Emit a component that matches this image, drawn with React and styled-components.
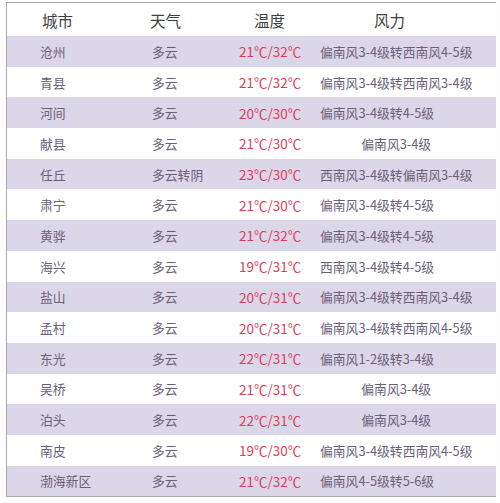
import styled, { createGlobalStyle } from 'styled-components'

const GlobalStyle = createGlobalStyle`
    html, body {
        margin: 0;
        padding: 0;
        background: #fff;
    }
`

const rows = [
    ['沧州', '多云', '21℃/32℃', '偏南风3-4级转西南风4-5级', 'left'],
    ['青县', '多云', '21℃/32℃', '偏南风3-4级转西南风3-4级', 'left'],
    ['河间', '多云', '20℃/30℃', '偏南风3-4级转4-5级', 'left'],
    ['献县', '多云', '21℃/30℃', '偏南风3-4级', 'center'],
    ['任丘', '多云转阴', '23℃/30℃', '西南风3-4级转偏南风3-4级', 'left'],
    ['肃宁', '多云', '21℃/30℃', '偏南风3-4级转4-5级', 'left'],
    ['黄骅', '多云', '21℃/32℃', '偏南风3-4级转4-5级', 'left'],
    ['海兴', '多云', '19℃/31℃', '西南风3-4级转4-5级', 'left'],
    ['盐山', '多云', '20℃/31℃', '偏南风3-4级转西南风3-4级', 'left'],
    ['孟村', '多云', '20℃/31℃', '偏南风3-4级转西南风4-5级', 'left'],
    ['东光', '多云', '22℃/31℃', '偏南风1-2级转3-4级', 'left'],
    ['吴桥', '多云', '21℃/31℃', '偏南风3-4级', 'center'],
    ['泊头', '多云', '22℃/31℃', '偏南风3-4级', 'center'],
    ['南皮', '多云', '19℃/30℃', '偏南风3-4级转西南风4-5级', 'left'],
    ['渤海新区', '多云', '21℃/32℃', '偏南风4-5级转5-6级', 'left'],
]

const Page = styled.div`
    padding: 2px 4px 0 6px;
    font-family: "Noto Sans CJK SC", "Noto Sans", sans-serif;
`

const Table = styled.div`
    border: 1px solid #a9a9a9;
    box-shadow: 0 1px 1px rgba(0, 0, 0, 0.08);
    display: grid;
    grid-template-columns: 133px 90px 80px 1fr;
`

const Row = styled.div`
    display: contents;
`

const Cell = styled.div`
    height: ${({ $head }) => ($head ? '33px' : '30.7px')};
    display: flex;
    align-items: center;
    justify-content: ${({ $align }) => ($align === 'center' ? 'center' : 'flex-start')};
    padding: ${({ $pad }) => $pad};
    background: ${({ $shade }) => ($shade ? '#dcd6e9' : '#fff')};
    color: ${({ $head, $hot }) => ($head ? '#3f3f3f' : $hot ? '#de3d5a' : '#6c5f79')};
    font-size: ${({ $head, $hot }) => ($head ? '15.5px' : $hot ? '13.5px' : '12.8px')};
    white-space: nowrap;
    box-sizing: border-box;
`

const pads = ['0 0 0 33px', '0 0 0 12px', '0 0 0 9px', '0 24px 0 10px']
const headPads = ['0 0 0 35px', '0 0 0 10px', '0 0 0 24px', '0 0 0 64px']

const App = () => {
    return (
        <Page>
            <GlobalStyle />
            <Table>
                <Row>
                    {['城市', '天气', '温度', '风力'].map((h, i) => (
                        <Cell key={h} $head $pad={headPads[i]}>{h}</Cell>
                    ))}
                </Row>
                {rows.map(([city, weather, temp, wind, align], i) => {
                    const shade = i % 2 === 0
                    return (
                        <Row key={city}>
                            <Cell $shade={shade} $pad={pads[0]}>{city}</Cell>
                            <Cell $shade={shade} $pad={pads[1]}>{weather}</Cell>
                            <Cell $shade={shade} $pad={pads[2]} $hot>{temp}</Cell>
                            <Cell $shade={shade} $pad={pads[3]} $align={align}>{wind}</Cell>
                        </Row>
                    )
                })}
            </Table>
        </Page>
    )
}

export default App
